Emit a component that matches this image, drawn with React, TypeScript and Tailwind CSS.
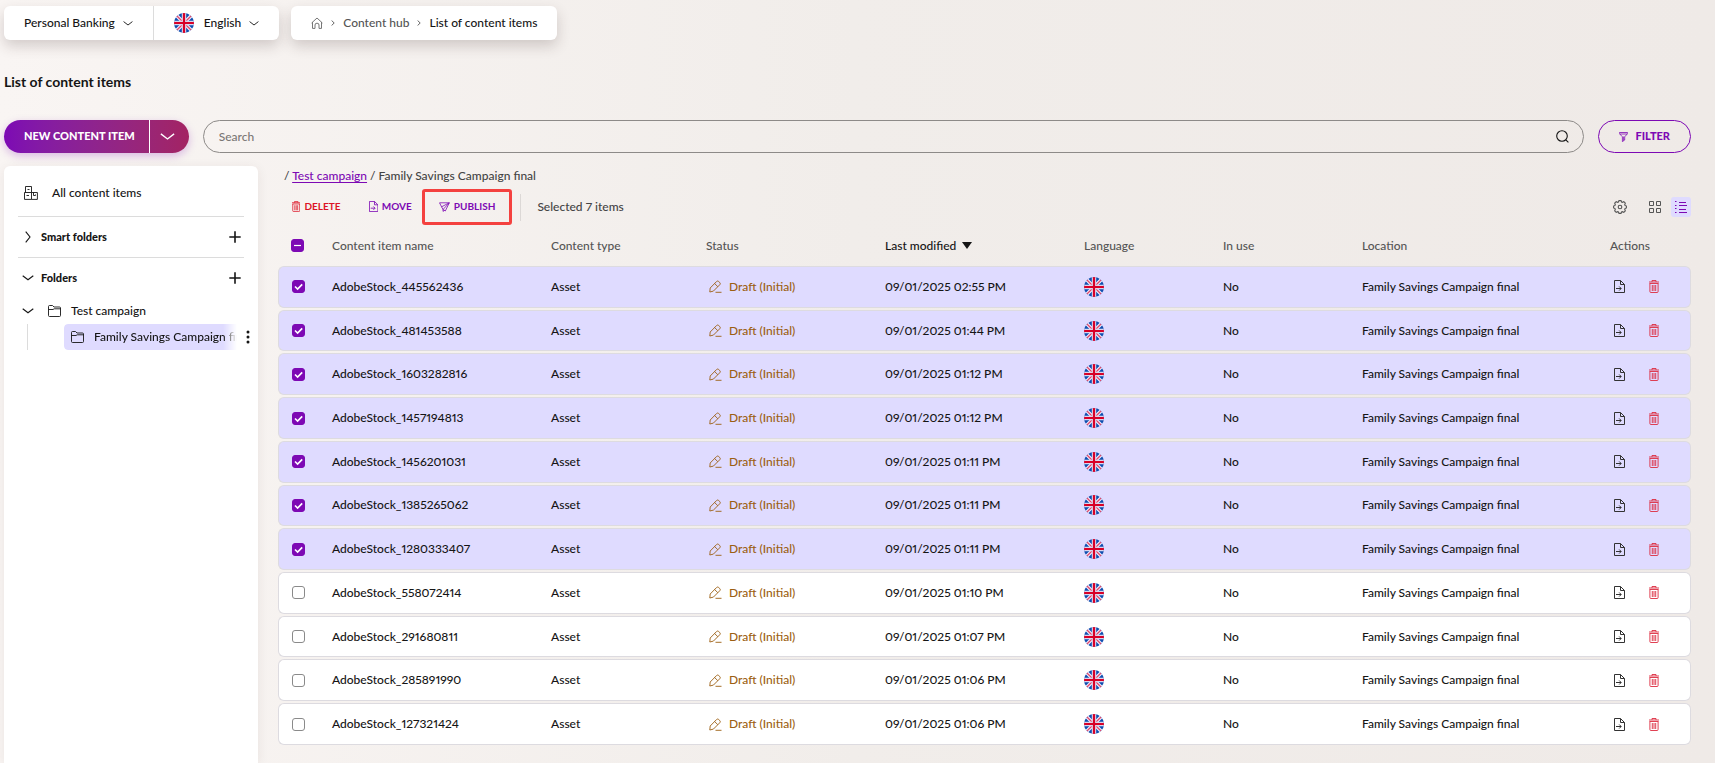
import React, { useState } from "react";

type IconProps = { className?: string };

const Chevron = ({ className = "" }: IconProps) => (
  <svg viewBox="0 0 12 6" className={className} fill="none" stroke="currentColor" strokeWidth="1.1" aria-hidden="true">
    <path d="M0.7 0.7 L6 4.8 L11.3 0.7" />
  </svg>
);

const ChevronRight = ({ className = "" }: IconProps) => (
  <svg viewBox="0 0 6 12" className={className} fill="none" stroke="currentColor" strokeWidth="1.1" aria-hidden="true">
    <path d="M0.7 0.7 L5 6 L0.7 11.3" />
  </svg>
);

const CrumbArrow = () => (
  <svg viewBox="0 0 4 6" className="w-1 text-[#555]" fill="none" stroke="currentColor" strokeWidth="0.9" aria-hidden="true">
    <path d="M0.6 0.5 L3.2 3 L0.6 5.5" />
  </svg>
);

const Flag = () => (
  <svg viewBox="0 0 20 20" className="size-5 rounded-full" role="img" aria-label="English">
    <rect width="20" height="20" fill="#0f4fb0" />
    <path d="M0 0 L20 20 M20 0 L0 20" stroke="#f3efff" strokeWidth="3.6" />
    <path d="M0 0 L20 20 M20 0 L0 20" stroke="#e0476a" strokeWidth="1.3" />
    <path d="M10 0 V20 M0 10 H20" stroke="#dcd6ee" strokeWidth="4.4" />
    <path d="M10 0 V20 M0 10 H20" stroke="#d80027" strokeWidth="2.2" />
  </svg>
);

const HomeIcon = ({ className = "" }: IconProps) => (
  <svg viewBox="0 0 12 12" className={className} fill="none" stroke="currentColor" strokeWidth="0.9" aria-hidden="true">
    <path d="M0.6 6 L6 1 L11.4 6 M1.5 5.2 V11.4 H4 V8 Q4 6.2 6 6.2 Q8 6.2 8 8 V11.4 H10.5 V5.2" />
  </svg>
);

const BoxesIcon = ({ className = "" }: IconProps) => (
  <svg viewBox="0 0 14 14" className={className} fill="none" stroke="currentColor" strokeWidth="0.9" aria-hidden="true">
    <path d="M1.5 6.5 V0.5 H7.5 V6.5 M3.5 3.5 H5.5 M0.5 13.4 V6.5 H7.5 V13.4 Z M2.5 9.5 H5 M7.5 13.4 H13.4 V6.5 H7.5 M9.5 6.5 V9.5 H11.5 V8.5" />
  </svg>
);

const FolderIcon = ({ className = "" }: IconProps) => (
  <svg viewBox="0 0 13 12" className={className} fill="none" stroke="currentColor" strokeWidth="0.9" aria-hidden="true">
    <path d="M0.5 10.5 V1.5 Q0.5 0.5 1.5 0.5 H4.5 L6 2 H11.5 Q12.5 2 12.5 3 V10.5 Q12.5 11.5 11.5 11.5 H1.5 Q0.5 11.5 0.5 10.5 Z M0.5 4.5 H5 L6.2 3.8 H12.5" />
  </svg>
);

const PlusIcon = ({ className = "" }: IconProps) => (
  <svg viewBox="0 0 12 12" className={className} fill="none" stroke="currentColor" strokeWidth="1.6" aria-hidden="true">
    <path d="M6 0.3 V11.7 M0.3 6 H11.7" />
  </svg>
);

const DotsIcon = ({ className = "" }: IconProps) => (
  <svg viewBox="0 0 4 14" className={className} fill="currentColor" aria-hidden="true">
    <circle cx="2" cy="2" r="1.5" />
    <circle cx="2" cy="7" r="1.5" />
    <circle cx="2" cy="12" r="1.5" />
  </svg>
);

const TrashIcon = ({ className = "" }: IconProps) => (
  <svg viewBox="0 0 10 13" className={className} fill="none" stroke="currentColor" strokeWidth="0.9" aria-hidden="true">
    <path d="M0 2 H10 M3 1.9 V0.5 H7 V1.9 M0.5 3.5 H9.5 M0.9 3.5 V11.5 Q0.9 12.5 1.9 12.5 H8.1 Q9.1 12.5 9.1 11.5 V3.5 M3.3 5 V11 M5 5 V11 M6.7 5 V11" />
  </svg>
);

const MoveIcon = ({ className = "" }: IconProps) => (
  <svg viewBox="0 0 11 13" className={className} fill="none" stroke="currentColor" strokeWidth="1" aria-hidden="true">
    <path d="M0.5 12.5 V0.5 H6.5 L10.5 4.5 V12.5 Z M6.5 0.5 V4.5 H10.5 M2 8.5 H7 M5.2 6.5 L7.2 8.5 L5.2 10.5" />
  </svg>
);

const SendIcon = ({ className = "" }: IconProps) => (
  <svg viewBox="0 0 11 10" className={className} fill="none" stroke="currentColor" strokeWidth="0.8" aria-hidden="true">
    <path d="M0.5 0.8 H10.3 L6.3 9 L4 7.5 L0.5 0.8 Z M10.3 0.8 L2.6 4.8 M10.3 0.8 L4 7.5 V9.4 L5.4 8.4" />
  </svg>
);

const FilterIcon = ({ className = "" }: IconProps) => (
  <svg viewBox="0 0 9 10" className={className} fill="none" stroke="currentColor" strokeWidth="0.8" aria-hidden="true">
    <path d="M0.4 0.5 H8.6 V1.6 L5.7 4.8 V8 L3.4 9.6 V4.8 L0.4 1.6 Z M0.8 2 H8.2 M4.6 4.5 V8.6" />
  </svg>
);

const SearchIcon = ({ className = "" }: IconProps) => (
  <svg viewBox="0 0 13 13" className={className} fill="none" stroke="currentColor" strokeWidth="1.1" aria-hidden="true">
    <circle cx="6" cy="6" r="5.3" />
    <path d="M9.8 9.8 L12.4 12.4" />
  </svg>
);

const GearIcon = ({ className = "" }: IconProps) => (
  <svg viewBox="0 0 14 14" className={className} fill="none" stroke="currentColor" strokeWidth="1.1" aria-hidden="true">
    <path d="M5.4 2 L6 0.6 H8 L8.6 2 L9.3 2.3 L10.8 1.7 L12.3 3.2 L11.7 4.7 L12 5.4 L13.4 6 V8 L12 8.6 L11.7 9.3 L12.3 10.8 L10.8 12.3 L9.3 11.7 L8.6 12 L8 13.4 H6 L5.4 12 L4.7 11.7 L3.2 12.3 L1.7 10.8 L2.3 9.3 L2 8.6 L0.6 8 V6 L2 5.4 L2.3 4.7 L1.7 3.2 L3.2 1.7 L4.7 2.3 Z" />
    <circle cx="7" cy="7" r="1.8" />
  </svg>
);

const GridIcon = ({ className = "" }: IconProps) => (
  <svg viewBox="0 0 12 12" className={className} fill="none" stroke="currentColor" strokeWidth="1" aria-hidden="true">
    <path d="M0.5 0.5 H4.5 V4.5 H0.5 Z M7.5 0.5 H11.5 V4.5 H7.5 Z M0.5 7.5 H4.5 V11.5 H0.5 Z M7.5 7.5 H11.5 V11.5 H7.5 Z" />
  </svg>
);

const ListIcon = ({ className = "" }: IconProps) => (
  <svg viewBox="0 0 12 12" className={className} fill="none" stroke="currentColor" strokeWidth="1" aria-hidden="true">
    <path d="M4 1.5 H11 M4 4.5 H12 M4 8.5 H11 M4 11.5 H12 M0 0.5 H1.5 M0 4.5 H1.5 M0 7.5 H1.5 M0 11.5 H1.5" />
  </svg>
);

const PencilIcon = ({ className = "" }: IconProps) => (
  <svg viewBox="0 0 13 13" className={className} fill="none" stroke="currentColor" strokeWidth="0.9" aria-hidden="true">
    <path d="M0.8 12 L1.2 8 L7.6 1.5 Q8.6 0.5 9.7 1.5 L10.8 2.6 Q11.8 3.7 10.8 4.7 L4.4 11.1 Z M5.6 3.5 L8.8 6.7 M6.5 12.3 H12.5" />
  </svg>
);

type Item = { name: string; modified: string; selected: boolean };

const initialItems: Item[] = [
  { name: "AdobeStock_445562436", modified: "09/01/2025 02:55 PM", selected: true },
  { name: "AdobeStock_481453588", modified: "09/01/2025 01:44 PM", selected: true },
  { name: "AdobeStock_1603282816", modified: "09/01/2025 01:12 PM", selected: true },
  { name: "AdobeStock_1457194813", modified: "09/01/2025 01:12 PM", selected: true },
  { name: "AdobeStock_1456201031", modified: "09/01/2025 01:11 PM", selected: true },
  { name: "AdobeStock_1385265062", modified: "09/01/2025 01:11 PM", selected: true },
  { name: "AdobeStock_1280333407", modified: "09/01/2025 01:11 PM", selected: true },
  { name: "AdobeStock_558072414", modified: "09/01/2025 01:10 PM", selected: false },
  { name: "AdobeStock_291680811", modified: "09/01/2025 01:07 PM", selected: false },
  { name: "AdobeStock_285891990", modified: "09/01/2025 01:06 PM", selected: false },
  { name: "AdobeStock_127321424", modified: "09/01/2025 01:06 PM", selected: false },
];

type CheckProps = { label: string; checked: boolean; mixed?: boolean; onChange: () => void };

const Check = ({ label, checked, mixed = false, onChange }: CheckProps) => (
  <label className="grid w-fit">
    <input
      type="checkbox"
      aria-label={label}
      checked={checked}
      onChange={onChange}
      className="col-start-1 row-start-1 size-[13px] appearance-none rounded-[3px] border border-[#8a8a8a] bg-white checked:border-[#7d09b4] checked:bg-[#7d09b4]"
    />
    {checked && (
      <svg
        viewBox="0 0 13 13"
        className="pointer-events-none col-start-1 row-start-1 size-[13px]"
        fill="none"
        stroke="white"
        strokeWidth={mixed ? 1.2 : 1.7}
        aria-hidden="true"
      >
        <path d={mixed ? "M3 6.5 H10" : "M3 6.5 L5.6 9 L10.2 4.4"} />
      </svg>
    )}
  </label>
);

export default function App() {
  const [items, setItems] = useState(initialItems);
  const count = items.filter((i) => i.selected).length;
  const toggle = (name: string) =>
    setItems(items.map((i) => (i.name === name ? { ...i, selected: !i.selected } : i)));
  const toggleAll = () => setItems(items.map((i) => ({ ...i, selected: count === 0 })));

  return (
    <div className="flex min-h-screen flex-col bg-linear-to-r from-[#f9f5f3] via-[#f1edea] to-[#efeae7] pt-1.5 pr-6 pl-1 font-['Lato',sans-serif] text-xs font-medium proportional-nums text-[#151515]">
      <header className="flex gap-3">
        <div className="flex h-[34px] rounded-md bg-white shadow-[0_6px_14px_rgba(60,40,40,0.2)]">
          <button className="flex items-center gap-2 border-r border-[#dcdcdc] pr-5 pl-5">
            Personal Banking
            <Chevron className="w-[10px]" />
          </button>
          <button className="flex items-center gap-2 px-5">
            <Flag />
            <span className="pl-0.5">English</span>
            <Chevron className="w-[10px]" />
          </button>
        </div>
        <nav
          aria-label="Breadcrumb"
          className="flex h-[34px] items-center gap-2 rounded-md bg-white px-5 shadow-[0_6px_14px_rgba(60,40,40,0.2)]"
        >
          <a href="#home" aria-label="Home" className="text-[#666]">
            <HomeIcon className="size-3" />
          </a>
          <CrumbArrow />
          <a href="#hub" className="text-[#555]">Content hub</a>
          <CrumbArrow />
          <span>List of content items</span>
        </nav>
      </header>

      <h1 className="mt-8 text-sm font-bold">List of content items</h1>

      <div className="mt-7 flex gap-3.5">
        <div className="flex h-[33px] rounded-full bg-linear-to-r from-[#7d09b4] to-[#a32363] text-white shadow-[0_3px_8px_rgba(125,9,180,0.25)]">
          <button className="border-r border-white pr-3.5 pl-5 text-[11px] font-black">NEW CONTENT ITEM</button>
          <button aria-label="More create options" className="pr-3.5 pl-2.5">
            <Chevron className="w-[15px]" />
          </button>
        </div>
        <div className="flex h-[33px] grow items-center rounded-full border border-[#8d8a88] pr-3.5 pl-[15px]">
          <input
            type="search"
            aria-label="Search"
            placeholder="Search"
            className="grow bg-transparent outline-none placeholder:text-[#7a7775]"
          />
          <button aria-label="Run search">
            <SearchIcon className="size-[13px]" />
          </button>
        </div>
        <button className="flex h-[33px] items-center gap-2 rounded-full border border-[#7d09b4] px-5 text-[11px] font-black text-[#7d09b4]">
          <FilterIcon className="w-[9px]" />
          FILTER
        </button>
      </div>

      <div className="mt-[13px] flex grow gap-5">
        <aside className="w-[254px] shrink-0 rounded-t-md bg-white px-3.5 pt-[3px] shadow-[0_2px_12px_rgba(60,40,40,0.08)]">
          <a href="#all" className="flex h-12 items-center gap-3.5 border-b border-[#dcdcdc] pl-1.5">
            <BoxesIcon className="size-3.5" />
            All content items
          </a>
          <div className="flex h-[41px] items-center border-b border-[#dcdcdc] pr-[3px]">
            <button className="flex grow items-center text-[11px] font-black">
              <span className="flex w-[23px] justify-center pr-1">
                <ChevronRight className="h-3" />
              </span>
              Smart folders
            </button>
            <button aria-label="Add smart folder">
              <PlusIcon className="size-3" />
            </button>
          </div>
          <div className="flex h-10 items-center pr-[3px]">
            <button className="flex grow items-center text-[11px] font-black">
              <span className="flex w-[23px] justify-center pr-1">
                <Chevron className="w-3" />
              </span>
              Folders
            </button>
            <button aria-label="Add folder">
              <PlusIcon className="size-3" />
            </button>
          </div>
          <button className="flex h-[26px] w-full items-center">
            <span className="flex w-[30px] justify-start pl-1">
              <Chevron className="w-3" />
            </span>
            <FolderIcon className="mr-2.5 w-[13px]" />
            Test campaign
          </button>
          <div className="-mr-2.5 ml-[9px] flex h-[26px] items-center border-l border-[#dcdcdc] pl-9">
            <a
              href="#family"
              className="flex h-full w-[173px] shrink-0 items-center gap-2.5 overflow-hidden rounded-l-sm bg-[#dfdbff] mask-r-from-92% pl-[7px] whitespace-nowrap"
            >
              <FolderIcon className="w-[13px] shrink-0" />
              Family Savings Campaign final
            </a>
            <button aria-label="Folder actions" className="ml-[9px] shrink-0">
              <DotsIcon className="h-3.5" />
            </button>
          </div>
        </aside>

        <main className="min-w-0 grow">
          <p className="px-1.5 leading-5 text-[#444]">
            / <a href="#test" className="text-[#7d09b4] underline underline-offset-2">Test campaign</a> / Family Savings
            Campaign final
          </p>
          <div className="mt-[3px] flex h-9 items-center text-[10px] font-bold text-[#7d09b4]">
            <button className="flex items-center gap-1 px-3.5 text-[#dc1425]">
              <TrashIcon className="h-[11px]" />
              DELETE
            </button>
            <button className="flex items-center gap-1 pr-2.5 pl-3.5">
              <MoveIcon className="h-[11px]" />
              MOVE
            </button>
            <button className="flex h-full items-center gap-1 rounded-[3px] border-[3px] border-[#f4413f] px-3.5">
              <SendIcon className="w-[11px]" />
              PUBLISH
            </button>
            <span className="ml-2 flex h-[27px] items-center border-l border-[#dcd8d6] pl-4 text-xs font-medium text-[#444]">
              Selected {count} items
            </span>
            <div className="ml-auto flex items-center text-[#555]">
              <button aria-label="Settings" className="mr-[22px]">
                <GearIcon className="size-[14px]" />
              </button>
              <button aria-label="Grid view" className="mr-[10px]">
                <GridIcon className="size-3" />
              </button>
              <button
                aria-label="List view"
                className="flex size-5 items-center justify-center rounded-[3px] bg-[#dfdbff] text-[#7d09b4]"
              >
                <ListIcon className="size-3" />
              </button>
            </div>
          </div>

          <table className="h-[522px] w-full table-fixed border-separate border-spacing-x-0 border-spacing-y-[2px] text-left">
            <colgroup>
              <col className="w-[54px]" />
              <col className="w-[219px]" />
              <col className="w-[155px]" />
              <col className="w-[179px]" />
              <col className="w-[199px]" />
              <col className="w-[139px]" />
              <col className="w-[139px]" />
              <col className="w-[248px]" />
              <col className="w-[81px]" />
            </colgroup>
            <thead className="text-[#555]">
              <tr className="h-[37px] *:font-medium">
                <th className="pl-[13px]">
                  <Check label="Select all items" checked={count > 0} mixed={count < items.length} onChange={toggleAll} />
                </th>
                <th>Content item name</th>
                <th>Content type</th>
                <th>Status</th>
                <th className="text-[#151515]" aria-sort="descending">
                  <button className="flex items-center gap-1.5">
                    Last modified
                    <svg viewBox="0 0 10 7" className="w-[10px]" fill="currentColor" aria-hidden="true">
                      <path d="M0 0 H10 L5 7 Z" />
                    </svg>
                  </button>
                </th>
                <th>Language</th>
                <th>In use</th>
                <th>Location</th>
                <th>Actions</th>
              </tr>
            </thead>
            <tbody>
              {items.map((item) => (
                <tr
                  key={item.name}
                  className={`h-[41px] *:border-y *:border-[#dddbe0] ${item.selected ? "*:bg-[#dfdbff]" : "*:bg-white"}`}
                >
                  <td className="rounded-l-md border-l pl-[13px]">
                    <Check label={item.name} checked={item.selected} onChange={() => toggle(item.name)} />
                  </td>
                  <td>{item.name}</td>
                  <td>Asset</td>
                  <td>
                    <span className="flex items-center gap-[7px] pl-[3px] text-[#9c5f12]">
                      <PencilIcon className="w-[13px]" />
                      Draft (Initial)
                    </span>
                  </td>
                  <td>{item.modified}</td>
                  <td>
                    <Flag />
                  </td>
                  <td>No</td>
                  <td>Family Savings Campaign final</td>
                  <td className="rounded-r-md border-r">
                    <div className="flex gap-6 pl-1">
                      <button aria-label={`Move ${item.name}`} className="text-[#333]">
                        <MoveIcon className="h-[13px] w-[11px]" />
                      </button>
                      <button aria-label={`Delete ${item.name}`} className="text-[#dc2b40]">
                        <TrashIcon className="h-[13px] w-[10px]" />
                      </button>
                    </div>
                  </td>
                </tr>
              ))}
            </tbody>
          </table>
        </main>
      </div>
    </div>
  );
}
